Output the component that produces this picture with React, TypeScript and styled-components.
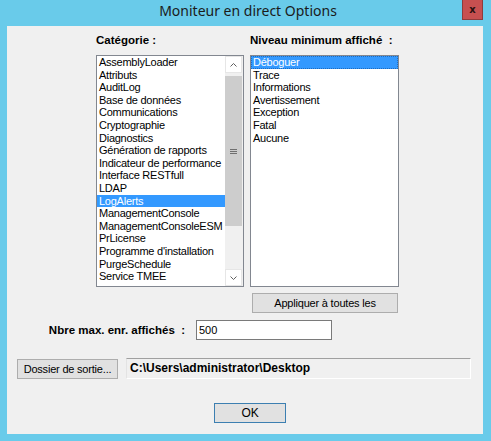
import React from 'react';
import styled, { createGlobalStyle } from 'styled-components';

const GlobalStyle = createGlobalStyle`
  html, body {
    margin: 0;
    padding: 0;
    background: #69cbea;
  }
  body {
    font-family: "Liberation Sans", Arial, sans-serif;
    font-size: 11px;
    color: #000;
  }
`;

const Window = styled.div`
  width: 491px;
  height: 441px;
  display: flex;
  flex-direction: column;
  background: #69cbea;
  box-sizing: border-box;
`;
const TitleBar = styled.div`
  height: 26px;
  display: grid;
  grid-template-columns: 1fr auto 1fr;
  align-items: start;
`;
const Title = styled.div`
  grid-column: 2;
  font-family: "Noto Sans", "Open Sans", sans-serif;
  font-size: 14px;
  line-height: 22px;
  color: #1b1b1b;
  padding-left: 5px;
`;
const CloseButton = styled.div`
  grid-column: 3;
  justify-self: end;
  margin-right: 8px;
  width: 21px;
  height: 20px;
  box-sizing: border-box;
  background: #c75050;
  border: 1px solid #8e3c3c;
  border-top: none;
  display: flex;
  align-items: center;
  justify-content: center;
  font-family: "DejaVu Sans", sans-serif;
  font-weight: bold;
  font-size: 10px;
  color: #2b1010;
`;
const Client = styled.div`
  flex: 1;
  margin: 0 8px 7px 7px;
  background: #f0f0f0;
  display: flex;
  flex-direction: column;
`;
const ListsRow = styled.div`
  display: flex;
  gap: 6px;
  padding: 8px 0 0 89px;
`;
const Column = styled.div<{ $width: number }>`
  width: ${(p) => p.$width}px;
  display: flex;
  flex-direction: column;
`;
const Label = styled.div`
  font-weight: bold;
  font-size: 11.5px;
  line-height: 13px;
  height: 13px;
  margin-bottom: 8px;
  white-space: pre;
`;
const ListBox = styled.div`
  height: 232px;
  box-sizing: border-box;
  border: 1px solid #828790;
  background: #fff;
  display: flex;
`;
const Items = styled.div`
  flex: 1;
  overflow: hidden;
`;
const Item = styled.div<{ $selected?: boolean; $focus?: boolean }>`
  height: 12.6px;
  line-height: 12.6px;
  padding-left: 2px;
  white-space: nowrap;
  letter-spacing: -0.25px;
  box-sizing: border-box;
  background: ${(p) => (p.$selected ? '#3399ff' : 'transparent')};
  color: ${(p) => (p.$selected ? '#fff' : '#000')};
  outline: ${(p) => (p.$focus ? '1px dotted #1e6cc0' : 'none')};
  outline-offset: -1px;
`;
const ScrollBar = styled.div`
  width: 17px;
  background: #f0f0f0;
  display: flex;
  flex-direction: column;
  padding: 0 1px 0 0;
`;
const ScrollArrow = styled.div`
  height: 17px;
  background: #fff;
  border: 1px solid #e6e6e6;
  box-sizing: border-box;
  display: flex;
  align-items: center;
  justify-content: center;
`;
const Track = styled.div`
  flex: 1;
  display: flex;
  flex-direction: column;
  padding: 3px 0 0 0;
`;
const Thumb = styled.div`
  height: 150px;
  background: #cdcdcd;
  display: flex;
  align-items: center;
  justify-content: center;
`;
const Grip = styled.div`
  width: 7px;
  height: 5px;
  border-top: 1px solid #6f6f6f;
  border-bottom: 1px solid #6f6f6f;
  position: relative;
  box-sizing: border-box;
  &::after {
    content: '';
    position: absolute;
    left: 0;
    right: 0;
    top: 1px;
    border-top: 1px solid #6f6f6f;
  }
`;
const Button = styled.button<{ $width: number; $default?: boolean }>`
  width: ${(p) => p.$width}px;
  height: 20px;
  padding: 0;
  box-sizing: border-box;
  border: 1px solid ${(p) => (p.$default ? '#3c7fb1' : '#adadad')};
  background: #e1e1e1;
  font-family: "Liberation Sans", Arial, sans-serif;
  font-size: ${(p) => (p.$default ? 12 : 11)}px;
  letter-spacing: -0.2px;
  color: #000;
`;
const ApplyRow = styled.div`
  padding: 6px 0 0 245px;
`;
const MaxRow = styled.div`
  display: flex;
  align-items: center;
  margin-top: 7px;
`;
const MaxLabel = styled.div`
  width: 178px;
  text-align: right;
  font-weight: bold;
  font-size: 11.5px;
  white-space: pre;
`;
const TextInput = styled.div`
  margin-left: 11px;
  width: 136px;
  height: 20px;
  box-sizing: border-box;
  border: 1px solid #7a7a7a;
  background: #fff;
  padding: 2px 0 0 2px;
  line-height: 14px;
`;
const OutputRow = styled.div`
  display: flex;
  align-items: center;
  gap: 8px;
  margin-top: 18px;
  padding-left: 10px;
`;
const PathBox = styled.div`
  width: 345px;
  height: 21px;
  box-sizing: border-box;
  border: 1px solid #fff;
  border-top-color: #a0a0a0;
  border-left-color: #e3e3e3;
  background: #f0f0f0;
  font-weight: bold;
  font-size: 12px;
  line-height: 19px;
  padding-left: 3px;
`;
const FooterRow = styled.div`
  margin-top: 24px;
  padding-left: 207px;
`;

const Chevron = ({ up }: { up?: boolean }) => (
  <svg width="7" height="4" viewBox="0 0 7 4">
    <path
      d={up ? 'M0.5 3.5 L3.5 0.5 L6.5 3.5' : 'M0.5 0.5 L3.5 3.5 L6.5 0.5'}
      fill="none"
      stroke="#606060"
      strokeWidth="1"
    />
  </svg>
);

const categories = [
  'AssemblyLoader',
  'Attributs',
  'AuditLog',
  'Base de données',
  'Communications',
  'Cryptographie',
  'Diagnostics',
  'Génération de rapports',
  'Indicateur de performance',
  'Interface RESTfull',
  'LDAP',
  'LogAlerts',
  'ManagementConsole',
  'ManagementConsoleESM',
  'PrLicense',
  "Programme d'installation",
  'PurgeSchedule',
  'Service TMEE',
];

const levels = ['Déboguer', 'Trace', 'Informations', 'Avertissement', 'Exception', 'Fatal', 'Aucune'];

const App = () => (
  <>
    <GlobalStyle />
    <Window>
      <TitleBar>
        <Title>Moniteur en direct Options</Title>
        <CloseButton>x</CloseButton>
      </TitleBar>
      <Client>
        <ListsRow>
          <Column $width={148}>
            <Label>Catégorie :</Label>
            <ListBox>
              <Items>
                {categories.map((c) => (
                  <Item key={c} $selected={c === 'LogAlerts'}>
                    {c}
                  </Item>
                ))}
              </Items>
              <ScrollBar>
                <ScrollArrow>
                  <Chevron up />
                </ScrollArrow>
                <Track>
                  <Thumb>
                    <Grip />
                  </Thumb>
                </Track>
                <ScrollArrow>
                  <Chevron />
                </ScrollArrow>
              </ScrollBar>
            </ListBox>
          </Column>
          <Column $width={149}>
            <Label>Niveau minimum affiché  :</Label>
            <ListBox>
              <Items>
                {levels.map((l, i) => (
                  <Item key={l} $selected={i === 0} $focus={i === 0}>
                    {l}
                  </Item>
                ))}
              </Items>
            </ListBox>
          </Column>
        </ListsRow>
        <ApplyRow>
          <Button $width={146}>Appliquer à toutes les</Button>
        </ApplyRow>
        <MaxRow>
          <MaxLabel>Nbre max. enr. affichés  :</MaxLabel>
          <TextInput>500</TextInput>
        </MaxRow>
        <OutputRow>
          <Button $width={101}>Dossier de sortie...</Button>
          <PathBox>C:\Users\administrator\Desktop</PathBox>
        </OutputRow>
        <FooterRow>
          <Button $width={72} $default>
            OK
          </Button>
        </FooterRow>
      </Client>
    </Window>
  </>
);

export default App;
